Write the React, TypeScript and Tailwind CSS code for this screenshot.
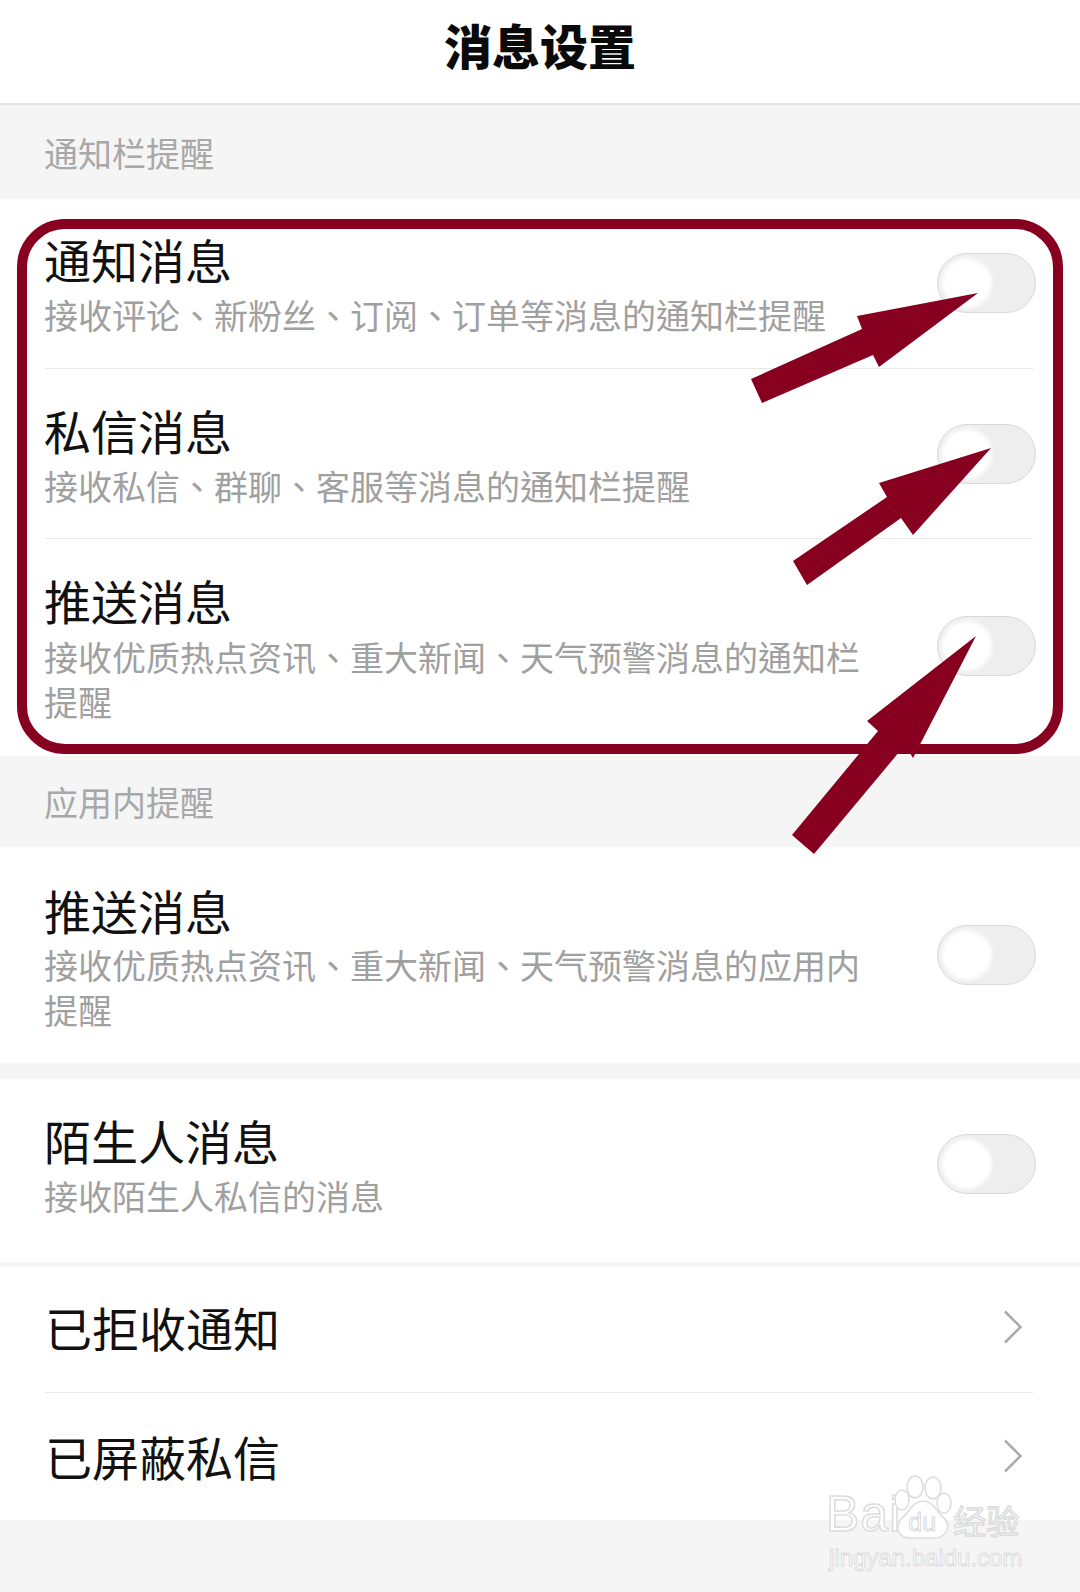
const CJK = 'font-["Noto_Sans_CJK_SC","Noto_Sans",sans-serif]';
const LATIN = "font-['Liberation_Sans',sans-serif]";

function Toggle({ className = '' }: { className?: string }) {
  return (
    <div className={`flex h-[60px] w-[99px] shrink-0 items-center rounded-full border border-[#d9d9d9] bg-[#eeeeee] pl-[4px] ${className}`}>
      <div className="h-[50px] w-[50px] rounded-full bg-white blur-[2px]" />
    </div>
  );
}

function Chevron() {
  return (
    <svg width="20" height="34" viewBox="0 0 20 34" fill="none" className="shrink-0">
      <path d="M2 1.5 L17.5 17 L2 32.5" stroke="#ababab" strokeWidth="2.5" />
    </svg>
  );
}

function SectionLabel({ text, className }: { text: string; className: string }) {
  return (
    <div className={`flex items-center bg-[#f5f5f5] pl-[44px] text-[34px] leading-[45px] text-[#a8a8a8] ${className}`}>
      {text}
    </div>
  );
}

function ToggleRow({ title, sub, className, subClass, toggleClass }: { title: string; sub: string; className: string; subClass: string; toggleClass: string }) {
  return (
    <div className={`flex items-center justify-between pl-[44px] pr-[44px] ${className}`}>
      <div className="w-[826px]">
        <div className="text-[47px] leading-[54px] text-[#111111]">{title}</div>
        <div className={`text-[34px] leading-[45px] text-[#a0a0a0] ${subClass}`}>{sub}</div>
      </div>
      <Toggle className={toggleClass} />
    </div>
  );
}

function LinkRow({ title, className }: { title: string; className: string }) {
  return (
    <div className={`flex items-center justify-between pl-[45px] pr-[57px] ${className}`}>
      <span className="text-[47px] leading-[54px] text-[#111111]">{title}</span>
      <Chevron />
    </div>
  );
}

function Divider() {
  return <div className="ml-[45px] mr-[47px] h-px bg-[#e8e8e8]" />;
}

function Watermark() {
  return (
    <div className="absolute left-[826px] top-[1472px] flex w-[210px] flex-col text-white">
      <div className="flex items-end">
        <span className={`text-[50px] leading-[56px] tracking-[1px] ${LATIN} [-webkit-text-stroke:1.5px_#dcdcdc]`}>Bai</span>
        <div className="relative -ml-[10px] flex h-[70px] w-[62px] shrink-0 items-end justify-center pb-[6px]">
          <svg width="62" height="70" viewBox="0 0 62 70" fill="#ffffff" stroke="#dddddd" strokeWidth="1.5" className="absolute inset-0">
            <ellipse cx="24" cy="15" rx="8" ry="11" />
            <ellipse cx="42" cy="16" rx="8" ry="11" />
            <ellipse cx="11" cy="28" rx="7" ry="10" />
            <ellipse cx="53" cy="31" rx="7" ry="10" />
            <path d="M32 29C43 29 45 40 53 46C61 54 55 66 43 66C37 66 27 66 19 66C7 66 3 54 11 46C19 40 21 29 32 29Z" />
          </svg>
          <span className={`relative text-[25px] leading-[28px] ${LATIN} [-webkit-text-stroke:1px_#d8d8d8]`}>du</span>
        </div>
        <span className="whitespace-nowrap text-[33px] leading-[44px] [-webkit-text-stroke:1.5px_#dcdcdc]">经验</span>
      </div>
      <span className={`ml-[3px] mt-[3px] whitespace-nowrap text-[24px] leading-[26px] ${LATIN} [-webkit-text-stroke:1px_#dcdcdc]`}>jingyan.baidu.com</span>
    </div>
  );
}

export default function App() {
  return (
    <div className={`relative h-[1592px] w-[1080px] overflow-hidden bg-[#f5f5f5] ${CJK}`}>
      <div className="flex h-[105px] items-center justify-center border-b-2 border-[#e4e4e4] bg-white pb-[16px] text-[48px] font-black leading-[54px] text-[#0a0a0a]">
        消息设置
      </div>
      <SectionLabel text="通知栏提醒" className="h-[94px]" />

      <div className="bg-white">
        <ToggleRow
          title="通知消息"
          sub="接收评论、新粉丝、订阅、订单等消息的通知栏提醒"
          className="pb-[31px] pt-[33px]"
          subClass='mt-[6px] font-["Noto_Sans_CJK_TC",sans-serif]'
          toggleClass="mb-[4px]"
        />
        <Divider />
        <ToggleRow
          title="私信消息"
          sub="接收私信、群聊、客服等消息的通知栏提醒"
          className="pb-[30px] pt-[34px]"
          subClass='mt-[6px] font-["Noto_Sans_CJK_TC",sans-serif]'
          toggleClass="mb-[4px]"
        />
        <Divider />
        <ToggleRow
          title="推送消息"
          sub="接收优质热点资讯、重大新闻、天气预警消息的通知栏提醒"
          className="pb-[32px] pt-[34px]"
          subClass='mt-[7px] font-["Noto_Sans_CJK_TC",sans-serif]'
          toggleClass="mb-[6px]"
        />
      </div>

      <SectionLabel text="应用内提醒" className="h-[91px]" />

      <ToggleRow
        title="推送消息"
        sub="接收优质热点资讯、重大新闻、天气预警消息的应用内提醒"
        className="bg-white pb-[31px] pt-[36px]"
        subClass='mt-[5px] font-["Noto_Sans_CJK_TC",sans-serif]'
        toggleClass="mb-[6px]"
      />

      <div className="h-[16px]" />

      <ToggleRow
        title="陌生人消息"
        sub="接收陌生人私信的消息"
        className="bg-white pb-[44px] pt-[34px]"
        subClass="mt-[6px]"
        toggleClass="mb-[4px]"
      />

      <div className="h-[5px]" />

      <div className="bg-white">
        <LinkRow title="已拒收通知" className="h-[125px] pb-[5px]" />
        <Divider />
        <LinkRow title="已屏蔽私信" className="h-[127px] pb-[2px]" />
      </div>

      {/* annotation on top of the screenshot */}
      <div className="absolute left-[17px] top-[219px] h-[535px] w-[1046px] rounded-[48px] border-[10px] border-[#87001f]" />
      <svg className="absolute left-0 top-0" width="1080" height="1592" viewBox="0 0 1080 1592" fill="#87001f">
        <polygon points="978,293 857,316 862,329 751,379 762,403 873,355 879,367" />
        <polygon points="991,448 879,483 887,497 793,561 807,585 901,518 913,535" />
        <polygon points="976,636 867,721 878,731 792,835 814,854 905,745 913,758" />
      </svg>

      <Watermark />
    </div>
  );
}
